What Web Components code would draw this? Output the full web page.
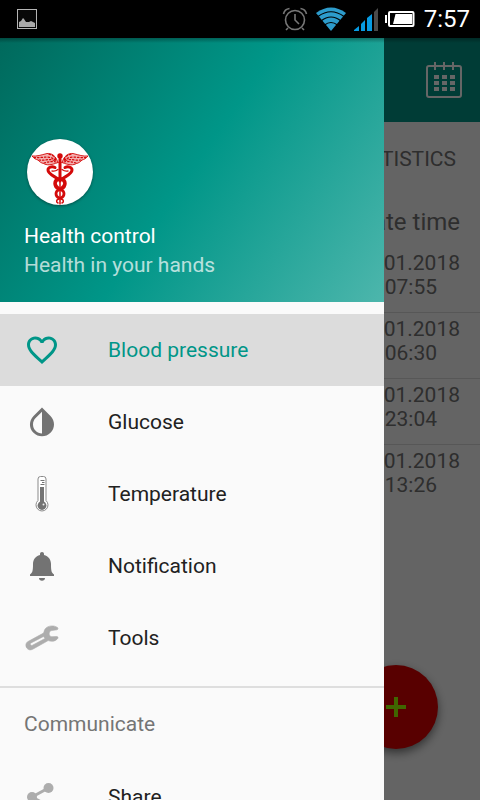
<!DOCTYPE html>
<html lang="en">
<head>
<meta charset="utf-8">
<meta name="viewport" content="width=device-width, initial-scale=1">
<title>Health control</title>
<style>
  body { margin: 0; font-family: Roboto, "Noto Sans", sans-serif; font-size: 21px; background: #fafafa; }
</style>
</head>
<body>
<health-app>
  <status-bar slot="status" time="7:57"></status-bar>
  <readings-page slot="page"></readings-page>
  <nav-drawer slot="drawer">
    <drawer-header slot="header" name="Health control" tagline="Health in your hands"></drawer-header>
    <nav-item active>
      <svg slot="icon" viewBox="0 0 24 24" fill="currentColor"><path d="M16.5 3c-1.74 0-3.41.81-4.5 2.09C10.91 3.81 9.24 3 7.5 3 4.42 3 2 5.42 2 8.5c0 3.78 3.4 6.86 8.55 11.54L12 21.35l1.45-1.32C18.6 15.36 22 12.28 22 8.5 22 5.42 19.58 3 16.5 3zm-4.4 15.55l-.1.1-.1-.1C7.14 14.24 4 11.39 4 8.5 4 6.5 5.5 5 7.5 5c1.54 0 3.04.99 3.57 2.36h1.87C13.46 5.99 14.96 5 16.5 5c2 0 3.5 1.5 3.5 3.5 0 2.89-3.14 5.74-7.9 10.05z"/></svg>
      Blood pressure
    </nav-item>
    <nav-item>
      <svg slot="icon" viewBox="0 0 24 24" fill="currentColor"><path d="M17.66 7.93L12 2.27 6.34 7.93c-3.12 3.12-3.12 8.19 0 11.31C7.9 20.8 9.95 21.58 12 21.58s4.1-.78 5.66-2.34c3.12-3.12 3.12-8.19 0-11.31zM12 19.59c-1.6 0-3.11-.62-4.24-1.76C6.62 16.69 6 15.19 6 13.59s.62-3.11 1.76-4.24L12 5.1v14.49z"/></svg>
      Glucose
    </nav-item>
    <nav-item>
      <svg slot="icon" viewBox="0 0 36 36">
        <path d="M14 24.500V3a2.500 2.500 0 0 1 2.500-2.500h3a2.500 2.500 0 0 1 2.500 2.500v21.500a6 6 0 1 1-8 0z" fill="#fff" stroke="#8a8a8a"/>
        <circle cx="18" cy="29.500" r="4.400" fill="currentColor"/>
        <path d="M16 11h4v16h-4z" fill="currentColor"/>
        <path d="M16.500 4.500h4M18 6.500h2.500M16.500 8.500h4" stroke="currentColor"/>
        <circle cx="19.500" cy="28.500" r="1" fill="#eee"/>
      </svg>
      Temperature
    </nav-item>
    <nav-item>
      <svg slot="icon" viewBox="0 0 36 36" fill="currentColor"><path d="M18 4c1.200 0 2 .8 2 2v1c4.500 1 7 4.600 7 9 0 7 .5 8.500 3 10.500V28H6v-1.500c2.500-2 3-3.500 3-10.500 0-4.400 2.500-8 7-9V6c0-1.200.8-2 2-2zM15 30h6c0 1.700-1.300 2.700-3 2.700s-3-1-3-2.700z"/></svg>
      Notification
    </nav-item>
    <nav-item soft>
      <svg slot="icon" viewBox="0 0 36 36"><path fill="currentColor" stroke="currentColor" stroke-width=".6" fill-rule="evenodd" d="M33.500 7.500C30 5 24 5.500 21.500 8.500c-1.500 1.800-1.300 3.500-2 4.600L4 21.500c-2.500 1.500-2.600 4.500-1.200 6.600 1.400 2 3.800 2.300 6 1.100l15.400-8.600c3.400 1.200 7.400.8 9.600-2.200.6-1 0-1.900-1-1.900l-5 .2c-1.600 0-2.700-1.500-2.600-3 .1-1.700 1-3 2.500-3.200l5.300-.7c1-.3 1.300-1.500.5-2.300zM19.500 16.500l1.500 2L8.500 25.200c-.8.400-1.600.1-2-.5-.4-.7-.1-1.400.6-1.800z"/></svg>
      Tools
    </nav-item>
    <drawer-heading>Communicate</drawer-heading>
    <nav-item soft>
      <svg slot="icon" viewBox="0 0 36 36" fill="currentColor"><circle cx="24.500" cy="9" r="5"/><circle cx="8" cy="18" r="5"/><circle cx="24.500" cy="27" r="5"/><path d="M24.500 9L8 18l16.500 9" fill="none" stroke="currentColor" stroke-width="3"/></svg>
      Share
    </nav-item>
  </nav-drawer>
</health-app>

<script>
const define = (name, markup, setup) => {
  const template = document.createElement('template');
  template.innerHTML = markup;
  customElements.define(name, class extends HTMLElement {
    constructor() {
      super();
      this.attachShadow({ mode: 'open' }).append(template.content.cloneNode(true));
    }
    connectedCallback() { if (setup) setup(this, this.shadowRoot); }
  });
};

define('health-app', `
  <style>
    :host { display: flex; flex-direction: column; height: 100vh; overflow: hidden; }
    .stage { position: relative; flex: 1; min-height: 0; display: flex; flex-direction: column; }
    .scrim { position: absolute; inset: 0; background: rgba(0,0,0,.6); }
    .drawer { position: absolute; inset: 0 20% 0 0; display: flex; }
    .shade { position: absolute; inset: 0 0 auto; height: 5px; background: linear-gradient(rgba(0,0,0,.3), transparent); }
  </style>
  <slot name="status"></slot>
  <div class="stage">
    <slot name="page"></slot>
    <div class="scrim"></div>
    <div class="drawer"><slot name="drawer"></slot></div>
    <div class="shade"></div>
  </div>`);

define('status-bar', `
  <style>
    :host { display: flex; align-items: center; height: 38px; padding: 0 10px 0 16px; background: #000; color: #fff; font-size: 24px; line-height: 40px; }
    svg { display: block; }
    .shot { margin-right: auto; }
    .wifi { margin: 0 8px; }
    .battery { margin: 0 9px 0 6px; }
  </style>
  <svg class="shot" width="22" height="22" viewBox="0 0 22 22"><rect x="1.500" y="1.500" width="19" height="19" fill="#080808" stroke="#b5b5b5"/><path fill="#aaa" d="M3 19v-5l2-1 2-3 1 1 2 3 3 0 2-1 2 1 2 1v4z"/></svg>
  <svg width="26" height="26" viewBox="0 0 26 26" fill="none" stroke="#777" stroke-width="1.600"><circle cx="13" cy="14" r="9.500"/><path d="M13 8v6l4 4M6 22l-2 2M20 22l2 2M1.500 8a7 7 0 0 1 6-5.500M24.500 8a7 7 0 0 0-6-5.500"/></svg>
  <svg class="wifi" width="30" height="24" viewBox="0 0 30 24"><path fill="#2d9ccc" d="M0 6Q15-5 30 6L15 24z"/><path d="M2 9.500Q15 0 28 9.500M5 14q10-8 20 0M8.500 18q6.500-5 13 0" fill="none" stroke="#000" stroke-width="1.200"/></svg>
  <svg width="25" height="24" viewBox="0 0 25 24"><path fill="#079be2" d="M0 24v-1l5-4v5zM7 24v-7l4-4v11zM13 24V11l5-4v17z"/><path fill="#4a4a4a" d="M20 24V5l4-4v23z"/></svg>
  <svg class="battery" width="30" height="18" viewBox="0 0 30 18"><rect x="4" y="2" width="24.500" height="14" rx="1" fill="none" stroke="#fff" stroke-width="2"/><path fill="#fff" d="M0 5h2v8H0zM10.500 4H27v10H8z"/></svg>
  <span></span>`,
  (el, root) => { root.querySelector('span').textContent = el.getAttribute('time'); });

define('readings-page', `
  <style>
    :host { position: relative; flex: 1; display: flex; flex-direction: column; background: #fafafa; color: #737373; }
    button { border: 0; margin: 0; padding: 0; background: none; font: inherit; color: inherit; }
    header { display: flex; align-items: center; justify-content: flex-end; height: 84px; padding: 0 16px; background: #009688; color: #fff; }
    svg { display: block; }
    nav { display: flex; justify-content: flex-end; height: 74px; padding: 0 24px; }
    table { width: 100%; border-collapse: collapse; text-align: right; }
    th { height: 51px; padding: 0 20px; font-size: 24px; font-weight: 400; box-sizing: border-box; }
    td { padding: 4px 20px 13px; line-height: 24px; border-bottom: 1px solid #dadada; }
    tr:last-child td { border: 0; }
    time { display: block; }
    .hour { padding-right: 23px; }
    .add { position: absolute; right: 42px; bottom: 51px; width: 84px; height: 84px; border-radius: 50%; background: #dc0000; box-shadow: 0 4px 10px rgba(0,0,0,.5); display: grid; place-items: center; }
  </style>
  <header><button aria-label="Calendar"><svg width="40" height="40" viewBox="0 0 40 40" fill="none" stroke="currentColor"><rect x="3" y="6" width="34" height="31" rx="2" stroke-width="2"/><path stroke-width="2" d="M11 2v8M20 2v8M29 2v8"/><path stroke-width="4" d="M10 17h5M18 17h5M26 17h5M10 23h5M18 23h5M26 23h5M10 29h5M18 29h5M26 29h5"/></svg></button></header>
  <nav><button>STATISTICS</button></nav>
  <table>
    <thead><tr><th>Date time</th></tr></thead>
    <tbody>
      <tr><td><time>01.2018</time><time class="hour">07:55</time></td></tr>
      <tr><td><time>01.2018</time><time class="hour">06:30</time></td></tr>
      <tr><td><time>01.2018</time><time class="hour">23:04</time></td></tr>
      <tr><td><time>01.2018</time><time class="hour">13:26</time></td></tr>
    </tbody>
  </table>
  <button class="add" aria-label="Add reading"><svg width="20" height="20" viewBox="0 0 20 20"><path d="M8 0h4v8h8v4h-8v8H8v-8H0V8h8z" fill="#a0ff00"/></svg></button>`);

define('nav-drawer', `
  <style>
    :host { flex: 1; display: flex; flex-direction: column; overflow: hidden; background: #fafafa; color: #212121; }
    nav { display: flex; flex-direction: column; padding-top: 12px; }
  </style>
  <slot name="header"></slot>
  <nav><slot></slot></nav>`);

define('drawer-header', `
  <style>
    :host { display: flex; flex: none; flex-direction: column; justify-content: flex-end; height: 264px; box-sizing: border-box; padding: 22px 24px; color: #fff; line-height: 29px; background: linear-gradient(124.5deg, #00695c, #009688 50%, #4db6ac); }
    svg { display: block; margin: 3px 3px 17px; border-radius: 50%; background: #fff; box-shadow: 0 1px 3px rgba(0,0,0,.4); }
    .tagline { opacity: .7; }
  </style>
  <svg width="66" height="66" viewBox="0 0 66 66" fill="none" stroke="#d40a0a" stroke-linecap="round">
    <g id="half">
      <path d="M31 23.500C29 17 25 14 20 14.500C14 16 10 17.500 5 17c2 2.500 4 3.500 6 4 1.500 2 3.500 3 5.500 3.500 3 1.800 7 2 14.500-1z" fill="#f3b0b0" stroke-width=".9"/>
      <path d="M7 18.500c8 1 15-3 22 3M12 21c6 1 10-2 17 1M22 15.500c4 0 6 3 7 5M17 24c4-1 8-2 12-1" stroke-width="1.200" stroke-dasharray="1.500 2"/>
      <path d="M28 28.500c-3-1.500-7-.5-7 2.500 0 4 6 6 10 9" stroke-width="3"/>
      <path d="M25 32c2 .5 4 0 6-1.500" stroke-width="1.300"/>
      <path d="M32 40c-5 1-5.500 7 0 10" stroke-width="3.600"/>
      <path d="M32 51c-4 1-4 6 0 8" stroke-width="2.800"/>
      <path d="M32 60c-3 .5-3 3-1 4" stroke-width="1.500"/>
    </g>
    <g id="mirror" transform="matrix(-1 0 0 1 66 0)"></g>
    <circle cx="33" cy="17" r="2.700" fill="#d40a0a" stroke="none"/>
    <path d="M33 20v22" stroke-width="3"/><path d="M33 42v23" stroke-width="1.500"/>
  </svg>
  <div class="name"></div><div class="tagline"></div>`,
  (el, root) => {
    root.querySelector('#mirror').innerHTML = root.querySelector('#half').innerHTML;
    for (const key of ['name', 'tagline']) root.querySelector('.' + key).textContent = el.getAttribute(key);
  });

define('nav-item', `
  <style>
    :host { display: block; --icon: #737373; }
    :host([soft]) { --icon: #adadad; }
    :host([active]) { --icon: #009688; color: #009688; background: #dcdcdc; }
    a { display: flex; align-items: center; gap: 48px; height: 72px; padding: 0 24px; color: inherit; text-decoration: none; line-height: 73px; }
    ::slotted(svg) { display: block; flex: none; width: 36px; height: 36px; color: var(--icon); }
  </style>
  <a href="#"><slot name="icon"></slot><span><slot></slot></span></a>`);

define('drawer-heading', `
  <style>
    :host { display: block; margin-top: 12px; padding: 0 24px; border-top: 2px solid #dedede; line-height: 73px; color: #757575; }
  </style>
  <slot></slot>`);
</script>
</body>
</html>
